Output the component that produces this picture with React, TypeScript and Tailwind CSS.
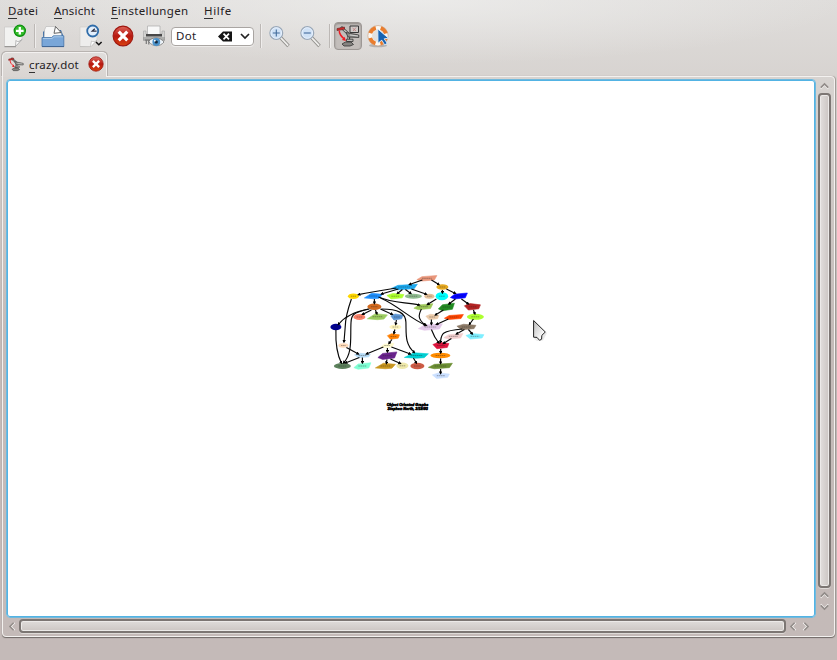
import React from 'react';

type Kind = 'e' | 'p' | 't' | 'h';
type GraphNode = [number, number, number, number, string, Kind];

// centre x, centre y, width, height, fill, outline
const nodes: GraphNode[] = [
  [426.5, 278.3, 20, 5.5, '#e9967a', 'p'],
  [404, 287, 26, 5.5, '#1ba9f0', 'p'],
  [442, 287, 12, 5.5, '#e5a820', 'e'],
  [353, 296.2, 11, 5.5, '#ffd700', 'e'],
  [373, 296, 18, 5.5, '#1e90ff', 't'],
  [395, 296.2, 17, 5.5, '#adff2f', 'h'],
  [413, 296.2, 17, 5, '#8fbc8f', 'e'],
  [429, 296.2, 10, 5, '#e3bf98', 'e'],
  [441.5, 296.2, 12.5, 8, '#00ffff', 'e'],
  [458.5, 296, 17, 6, '#0000ff', 'p'],
  [374, 306.7, 14, 6.5, '#d2691e', 'e'],
  [423, 306.7, 19, 6, '#9dc858', 'p'],
  [446, 307, 16, 7.5, '#228b22', 'p'],
  [472, 306.8, 16, 6.5, '#b22222', 'h'],
  [359, 317, 12, 6, '#fa8068', 'e'],
  [377, 316.7, 20, 6, '#9bcb5f', 't'],
  [396.5, 317, 12, 6, '#5b94d3', 'h'],
  [432, 317, 13, 5.5, '#ebcaa9', 'h'],
  [453.5, 317, 19, 5, '#ff4500', 'p'],
  [475, 316.8, 17, 6, '#adff2f', 'e'],
  [335.5, 327, 11, 6.5, '#000090', 'e'],
  [395, 327, 12, 5, '#fff6bf', 'e'],
  [430, 327, 24, 6.5, '#e2c8e8', 'p'],
  [466, 327, 19, 5.5, '#8b7966', 'h'],
  [393, 336.5, 12, 5.5, '#ff7f00', 'h'],
  [453, 336.3, 19, 5.5, '#f2cece', 'p'],
  [474.5, 336.3, 18, 5.5, '#7eeeff', 'h'],
  [343, 345.5, 10, 4.5, '#ffdab9', 'e'],
  [387, 345.5, 13, 4.5, '#fffacd', 'p'],
  [440.5, 345.5, 16, 6.5, '#dc143c', 'h'],
  [362, 355.5, 16, 4.5, '#b4daf5', 'h'],
  [387, 355.7, 19, 7.5, '#68228b', 'p'],
  [416, 355.5, 24, 5.5, '#00ced1', 't'],
  [440, 355.5, 20, 5.5, '#ff8c00', 'e'],
  [342, 366, 17, 6, '#5b805b', 'e'],
  [362, 366, 17, 6.5, '#7fffd4', 'p'],
  [385, 366, 20, 5.5, '#c8961e', 't'],
  [402, 365.8, 12, 6.5, '#eee8aa', 'e'],
  [417, 366, 14, 6.5, '#cd5b45', 'e'],
  [440, 366, 24, 5.5, '#6b8e33', 'p'],
  [440.5, 375.7, 17, 5.5, '#cadfff', 'h'],
];

const edges: string[] = [
  'M422 280 409 284.5', 'M431 280 438.5 284.5',
  'M396 288Q370 292 358 294.6', 'M398 289 381 294',
  'M402 289.5 397 293.5', 'M405 289.5 410.5 293.5', 'M411 289 426 294.3',
  'M442 290V293', 'M446 289 455 293.5',
  'M351 299Q345 316 344.8 327L343.6 342',
  'M374 299V303.5', 'M380 298C397 305 410 319 426 325.5',
  'M378 297C392 303 403 302 419 305',
  'M436 299 427 304.5', 'M455 299 448.5 304', 'M461 299 468 304',
  'M368 309Q347 313 338 324.5', 'M369 309C349 313 351 317 350.5 325C350 339 352 354 343 363',
  'M371 310 362 314.5', 'M375 310 376.5 314', 'M380 309 392 314.5',
  'M381 309C398 309 405 313 405.5 322C406 333 404 344 414 352.5',
  'M421 309C418 315 417 319 425 325',
  'M443 310 435 315', 'M431 319.5 431 324.5', 'M448 319 436 324.5',
  'M473 310 474.5 314', 'M473 319 469 324.5',
  'M396 320 395.3 324.5', 'M394.5 329.5 393.5 333.5', 'M391.5 339.5 388.5 343.5',
  'M335.5 330C335 345 337 355 341 363',
  'M346 347.5 358 354', 'M383 347 366 354', 'M387 348V352', 'M391 347 410 354',
  'M359 357.5 345 363', 'M362 357.5V363', 'M386.5 359.5 386 363.5', 'M390 359 400 363.5',
  'M413 358 416 363',
  'M431 329.5C433 335 436 340 438.5 343', 'M462 329C440 331 441 334 440 342.5',
  'M464 329.5 456 334', 'M468 329.5 472 334', 'M451 338.5 443 343.5',
  'M440.3 349V353', 'M440.2 358.5V363.5', 'M440.2 369V373.5',
];

function Shape({ n }: { n: GraphNode }) {
  const [x, y, w, h, fill, kind] = n;
  const a = w / 2;
  const b = h / 2;
  if (kind === 'e') return <ellipse cx={x} cy={y} rx={a} ry={b} fill={fill} />;
  const points =
    kind === 'p'
      ? `${x - a},${y + b * 0.5} ${x - a * 0.5},${y - b * 0.6} ${x + a},${y - b} ${x + a * 0.75},${y + b * 0.6} ${x - a * 0.5},${y + b}`
      : kind === 't'
        ? `${x - a},${y + b * 0.7} ${x - a * 0.2},${y - b} ${x + a},${y - b * 0.6} ${x + a * 0.65},${y + b * 0.8} ${x},${y + b}`
        : `${x - a},${y - b * 0.3} ${x - a * 0.3},${y - b} ${x + a},${y - b * 0.6} ${x + a * 0.8},${y + b * 0.6} ${x - a * 0.5},${y + b}`;
  return <polygon points={points} fill={fill} stroke={fill} strokeWidth=".6" strokeLinejoin="round" />;
}

function Graph() {
  return (
    <svg className="h-full w-full" viewBox="8 81 806 535" preserveAspectRatio="none">
      <defs>
        <marker id="tip" viewBox="0 0 4 4" refX="2.4" refY="2" markerWidth="3.4" markerHeight="3.4" markerUnits="userSpaceOnUse" orient="auto">
          <path d="M0 0 4 2 0 4Z" />
        </marker>
        <linearGradient id="pointer" x2="1" y2="1">
          <stop stopColor="#bcbcbc" />
          <stop offset=".8" stopColor="#fff" />
        </linearGradient>
      </defs>
      <g transform="translate(.4 0)">
        {nodes.map((n, i) => (
          <Shape key={i} n={n} />
        ))}
        <g fill="none" stroke="#080808" strokeWidth="1.15">
          {edges.map((d, i) => (
            <path key={i} d={d} markerEnd="url(#tip)" />
          ))}
        </g>
        <g stroke="#222" strokeWidth=".8" strokeDasharray="1.6 .5" opacity=".45">
          {nodes.map(([x, y, w], i) => (
            <path key={i} d={`M${x - w * 0.24} ${y}H${x + w * 0.24}`} />
          ))}
        </g>
        <g fontFamily="Liberation Sans, sans-serif" fontSize="4" fontWeight="bold" fontStyle="italic" stroke="#000" strokeWidth=".55">
          <text x="386.3" y="405.5" textLength="41.5" lengthAdjust="spacingAndGlyphs">Object Oriented Graphs</text>
          <text x="387" y="409.6" textLength="40.5" lengthAdjust="spacingAndGlyphs">Stephen North, 3/19/93</text>
        </g>
      </g>
      <path d="M535 322 547 333 543 340.5 537 341 534.5 339Z" fill="#777" opacity=".16" />
      <path d="M533.6 320.5V337.2L537 337.4 539.5 340.3 541.6 339.2 541.8 335.4 545.3 332Z" fill="url(#pointer)" stroke="#222" strokeWidth="1" strokeLinejoin="round" />
    </svg>
  );
}

function MenuItem({ label, width, spacing }: { label: string; width: string; spacing: string }) {
  return (
    <span className={`${width} ${spacing} whitespace-nowrap`}>
      <span className="border-b border-[#333]">{label[0]}</span>
      {label.slice(1)}
    </span>
  );
}

function NewIcon() {
  return (
    <svg className="h-6 w-6 shrink-0" viewBox="0 0 24 24">
      <path d="M1.5 3H19V16L12.5 22.5H1.5Z" fill="#f2f2f1" stroke="#c9c7c5" strokeWidth=".7" />
      <path d="M1.5 22.7H13" stroke="#8c8a88" />
      <path d="M18.8 15.5C16 18 14 18 13 16.5L12.5 22.5Z" fill="#fff" stroke="#999" strokeWidth=".7" />
      <circle cx="16.8" cy="6.8" r="5.6" fill="#35bd2b" stroke="#0b8d0e" strokeWidth="1.2" />
      <path d="M16.8 3V10.6M13 6.8H20.6" stroke="#fff" strokeWidth="2.3" />
    </svg>
  );
}

function OpenIcon() {
  return (
    <svg className="h-6 w-6 shrink-0" viewBox="0 0 24 24">
      <path d="M2 8 4 6H20L22 11V16H2Z" fill="#3a6ca6" />
      <path d="M3.5 6 5 2.5H14.5L20 8.5 21 15H3Z" fill="#f7f7f7" stroke="#b6b6b6" strokeWidth=".6" />
      <path d="M14.5 2.5 13 9.3 20 8.5Z" fill="#fff" stroke="#555" strokeWidth=".9" />
      <path d="M1 13.5H10.5L12.5 11.8H22.8V22.5H1Z" fill="#79a6d8" stroke="#4575ab" strokeWidth=".8" />
      <path d="M2 14.5H11L13 12.8H22" stroke="#a9c9e9" fill="none" />
      <path d="M1 22.6H23" stroke="#3f6593" />
    </svg>
  );
}

function RecentIcon() {
  return (
    <svg className="h-6 w-6 shrink-0" viewBox="0 0 24 24">
      <path d="M1 3H18V16L12 22.5H1Z" fill="#eeedec" stroke="#d0cecc" strokeWidth=".7" />
      <path d="M1 22.6H12L18 16C16 18 14 18 12.5 17L11.5 22" fill="#fff" stroke="#b0aeac" strokeWidth=".6" />
      <circle cx="13.7" cy="7" r="5.5" fill="#e3effc" stroke="#2f6ca9" strokeWidth="1.8" />
      <path d="M17.6 7.2H13.2L15.8 4.7" stroke="#334" fill="none" strokeWidth="1.3" />
      <path d="M17 18 19.8 20.8 22.6 18" stroke="#111" strokeWidth="1.5" fill="none" />
    </svg>
  );
}

function CloseIcon({ size }: { size: string }) {
  return (
    <svg className={`${size} shrink-0`} viewBox="0 0 22 22">
      <defs>
        <linearGradient id="red" x2="0" y2="1">
          <stop stopColor="#df665c" />
          <stop offset=".5" stopColor="#b71810" />
          <stop offset="1" stopColor="#d84210" />
        </linearGradient>
      </defs>
      <circle cx="11" cy="11" r="9.9" fill="url(#red)" stroke="#9f1710" strokeWidth="1.1" />
      <path d="M6.7 6.7 15.3 15.3M15.3 6.7 6.7 15.3" stroke="#fff" strokeWidth="3.2" />
    </svg>
  );
}

function PrintIcon() {
  return (
    <svg className="h-6 w-6 shrink-0" viewBox="0 0 24 24">
      <path d="M1.5 7H4V10H20V7H22.5V16H1.5Z" fill="#d3d3d1" stroke="#aaa" strokeWidth=".7" />
      <path d="M5.5 11V2H18V11" fill="#f8f8f8" stroke="#aaa" strokeWidth=".7" />
      <path d="M4 10H20V12.5H4Z" fill="#484848" />
      <path d="M1 14H23M1 16H23" stroke="#8b8b89" />
      <path d="M6.5 17.5C10 12.7 18 12.7 22 18C18 23 11 23 7 18Z" fill="#edf3f8" stroke="#777" strokeWidth=".8" />
      <path d="M3 16H8M4.3 16V20M6.8 16V20.5" stroke="#777" strokeWidth="1.2" />
      <circle cx="14.3" cy="18" r="3.9" fill="#4a91c9" />
      <circle cx="14.3" cy="18" r="1.6" fill="#17283a" />
      <circle cx="12.8" cy="16.7" r=".9" fill="#fff" />
    </svg>
  );
}

function ZoomIcon({ plus }: { plus?: boolean }) {
  return (
    <svg className="h-6 w-6 shrink-0" viewBox="0 0 24 24">
      <path d="M13 14 20.5 22" stroke="#908f8b" strokeWidth="3.4" />
      <path d="M12.6 13.6 20.2 21.7" stroke="#efeeec" strokeWidth="1.7" />
      <circle cx="8.3" cy="9" r="6.4" fill="#cfe1f5" stroke="#9aa8b8" strokeWidth="1.2" />
      <circle cx="8.3" cy="9" r="5.3" fill="none" stroke="#e8f2ff" strokeWidth=".9" />
      <path d={plus ? 'M4.8 9H11.8M8.3 5.5V12.5' : 'M4.8 9H11.8'} stroke="#426b9b" strokeWidth="1.1" />
    </svg>
  );
}

function RobotIcon({ size, screen }: { size: string; screen?: boolean }) {
  return (
    <svg className={`${size} shrink-0`} viewBox="0 0 24 24">
      {screen && (
        <g>
          <path d="M14 2H22.5V8.5H14Z" fill="#cfcbc9" stroke="#383838" strokeWidth="1" />
          <path d="M16.5 4 20 7M20 3.5 17 7" stroke="#bd7777" strokeWidth=".8" />
        </g>
      )}
      <path d="M5 3 13 10.5 12.5 18" stroke="#444" strokeWidth="2.8" fill="none" />
      <path d="M5.5 3.5 13 10.5 12 17" stroke="#c8c6c2" strokeWidth="1.1" fill="none" />
      <path d="M10 8.5 22.8 11V13.5L12 13Z" fill="#8d8c89" stroke="#383838" strokeWidth=".8" />
      <path d="M14 11 22 12" stroke="#ddd" strokeWidth=".9" />
      <path d="M1 4.5 8.5 3V5.3L1 6.6Z" fill="#d22928" stroke="#642524" strokeWidth=".6" />
      <path d="M3.3 6.5C3 10 5 12 8.7 15.5" stroke="#f01d25" strokeWidth="1.4" fill="none" />
      <path d="M8.5 12.8 10 17 6 16Z" fill="#f01d25" />
      <path d="M10.5 15.2H17V17.5H10.5Z" fill="#bbb9b6" stroke="#333" strokeWidth=".8" />
      <path d="M6 20 9.5 18H15L17.5 20.5 14 22H8Z" fill="#868481" stroke="#333" strokeWidth=".8" />
    </svg>
  );
}

function HelpIcon() {
  return (
    <svg className="h-6 w-6 shrink-0" viewBox="0 0 24 24">
      <ellipse cx="12" cy="21.5" rx="9" ry="1.7" fill="#888" opacity=".5" />
      <circle cx="12" cy="11.7" r="8.2" fill="none" stroke="#faf8f3" strokeWidth="4.4" />
      <circle cx="12" cy="11.7" r="8.2" fill="none" stroke="#ea7d2d" strokeWidth="3.8" strokeDasharray="7.9 4.98" strokeDashoffset="-2.5" />
      <circle cx="12" cy="11.7" r="10.2" fill="none" stroke="#c59574" strokeWidth=".6" />
      <path d="M11.8 5 22.5 14.2 18.2 14.8 21.2 19.3 18.7 20.9 15.8 16.2 12 19.2Z" fill="#1762b0" stroke="#e0eefb" strokeWidth=".9" />
    </svg>
  );
}

function Separator() {
  return <div className="h-6 w-[2px] shrink-0 border-l border-[#bcb8b5] bg-[#efedec]" />;
}

function Chevron({ turn }: { turn: string }) {
  return (
    <svg className={`h-[9px] w-[9px] shrink-0 ${turn}`} viewBox="0 0 9 9" fill="none">
      <path d="M.8 7.8 4.5 4.1 8.2 7.8" stroke="#f4f2f0" strokeWidth="1.2" />
      <path d="M.8 6.6 4.5 2.9 8.2 6.6" stroke="#918b88" strokeWidth="1.5" />
    </svg>
  );
}

export default function App() {
  return (
    <div className="flex h-[660px] w-[837px] flex-col overflow-hidden bg-[radial-gradient(ellipse_430px_64px_at_50%_0,#f0f0efb3,transparent),linear-gradient(#dfdddb_0,#d7d3d0_80px,#c4bbb8_330px,#c4bab8_100%)] font-['Noto_Sans','Open_Sans',sans-serif] text-[11.5px] text-[#25211f]">
      <nav className="flex h-[21px] shrink-0 items-start pl-2 pt-[4px] leading-[14px]">
        <MenuItem label="Datei" width="w-[46px]" spacing="tracking-[0.4px]" />
        <MenuItem label="Ansicht" width="w-[57px]" spacing="tracking-[0.2px]" />
        <MenuItem label="Einstellungen" width="w-[93px]" spacing="tracking-[0.3px]" />
        <MenuItem label="Hilfe" width="w-[40px]" spacing="tracking-[0.6px]" />
      </nav>
      <div className="flex h-[30px] shrink-0 items-center pl-[3px]">
        <NewIcon />
        <div className="w-[7px]" />
        <Separator />
        <div className="w-[5px]" />
        <OpenIcon />
        <div className="w-[14px]" />
        <RecentIcon />
        <div className="w-[9px]" />
        <CloseIcon size="h-[22px] w-[22px]" />
        <div className="w-[8px]" />
        <PrintIcon />
        <div className="ml-[5px] flex h-[19px] w-[83px] shrink-0 items-center rounded-[4px] border border-[#a9a5a2] bg-white pl-1 shadow-[0_1px_0_#eeecea]">
          <span className="w-[42px] tracking-[0.3px]">Dot</span>
          <svg className="h-[11px] w-[15px]" viewBox="0 0 15 11">
            <path d="M0 5.5 5 .5H14V10.5H5Z" fill="#151515" />
            <path d="M5.5 2.7 11 8.3M11 2.7 5.5 8.3" stroke="#fff" strokeWidth="1.7" />
          </svg>
          <svg className="ml-[7px] h-[8px] w-[10px]" viewBox="0 0 10 8">
            <path d="M1 2 5 6 9 2" stroke="#222" strokeWidth="1.7" fill="none" />
          </svg>
        </div>
        <div className="w-[6px]" />
        <Separator />
        <div className="w-[6px]" />
        <ZoomIcon plus />
        <div className="w-[7px]" />
        <ZoomIcon />
        <div className="w-[6px]" />
        <Separator />
        <div className="ml-[3px] flex h-[28px] w-[28px] shrink-0 items-center justify-center rounded-[4px] border border-[#9d9895] bg-[#c3bebb] shadow-[inset_0_1px_2px_#8f8986]">
          <RobotIcon size="h-6 w-6" screen />
        </div>
        <div className="w-[4px]" />
        <HelpIcon />
      </div>
      <div className="flex h-[25px] shrink-0 pl-[2px] pt-px">
        <div className="z-10 -mb-px flex w-[105px] items-center rounded-t-[5px] border border-b-0 border-[#f3f1f0] bg-[linear-gradient(#e0dddb,#d9d5d2)] pb-[2px] pl-[5px] shadow-[-1px_-1px_0_#b8b3b0,1px_-1px_0_#b8b3b0]">
          <RobotIcon size="h-4 w-4" />
          <span className="ml-[5px] w-[59px] whitespace-nowrap pt-px leading-[14px] tracking-[0.15px]">
            <span className="border-b border-[#333]">c</span>razy.dot
          </span>
          <CloseIcon size="h-4 w-4" />
        </div>
      </div>
      <main className="ml-[2px] flex h-[561px] w-[833px] shrink-0 flex-col rounded-[4px] rounded-tl-none border border-[#f3f1ef] pl-[3px] pt-[2px] shadow-[0_1px_1px_#6e6865,1px_0_1px_#a49d99]">
        <div className="flex h-[539px] shrink-0">
          <div className="w-[810px] shrink-0 rounded-[4px] border border-[#71b9dc] bg-white shadow-[inset_0_0_0_1px_#52b3e4] p-px">
            <Graph />
          </div>
          <div className="ml-[2px] flex w-[13px] flex-col items-center pt-[2px]">
            <Chevron turn="" />
            <div className="mt-[3px] h-[495px] w-[13px] shrink-0 rounded-[4px] border-2 border-[#7c7673] bg-[linear-gradient(90deg,#e2dfdd,#cbc5c2)] shadow-[inset_0_0_0_1px_#eceae8,0_1px_0_#dedad7]" />
            <div className="h-[2px] shrink-0" />
            <Chevron turn="" />
            <div className="h-[4px] shrink-0" />
            <Chevron turn="rotate-180" />
          </div>
        </div>
        <div className="flex h-[16px] shrink-0 items-center pl-px">
          <Chevron turn="-rotate-90" />
          <div className="ml-[3px] h-[14px] w-[767px] shrink-0 rounded-[4px] border-2 border-[#7c7673] bg-[linear-gradient(#dfdcda,#ccc6c3)] shadow-[inset_0_0_0_1px_#eceae8,0_1px_0_#dedad7]" />
          <div className="w-[2px] shrink-0" />
          <Chevron turn="-rotate-90" />
          <div className="w-[5px] shrink-0" />
          <Chevron turn="rotate-90" />
        </div>
      </main>
    </div>
  );
}
